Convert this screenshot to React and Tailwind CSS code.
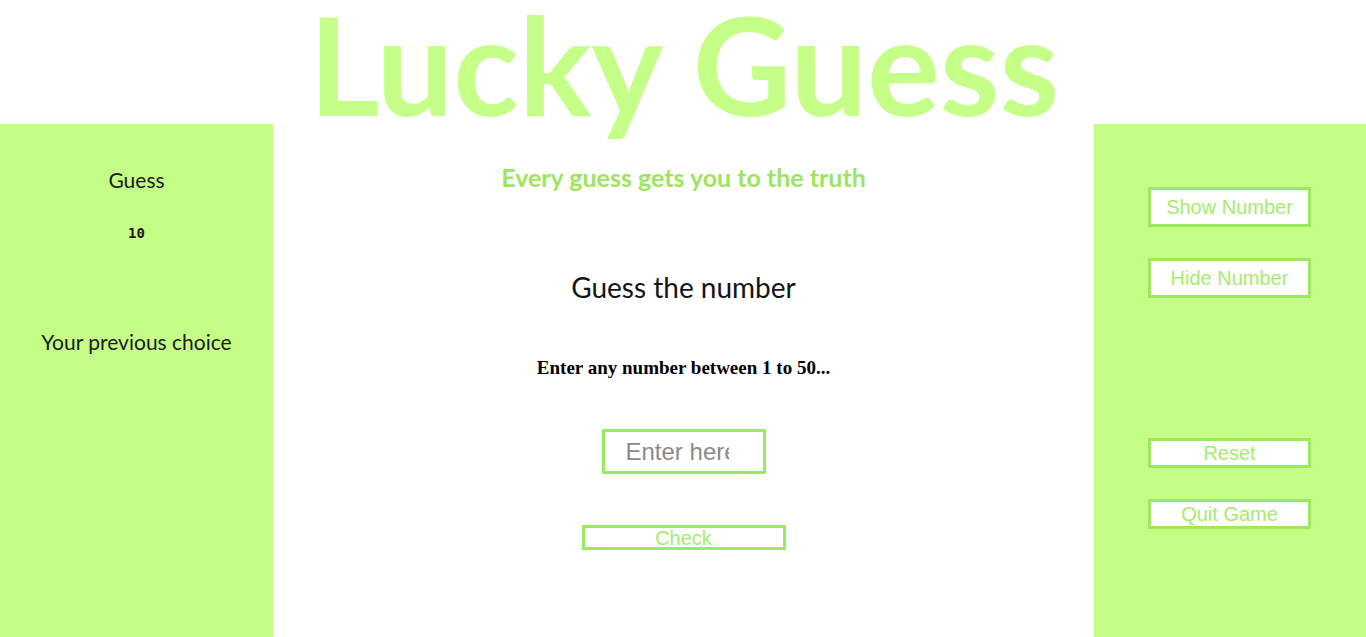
import React from 'react';

const SIDE_BUTTON =
  'w-[163px] bg-white border-[3px] border-[#9be95e] text-[#a6ec6c] text-[20px] font-["Liberation_Sans",Arial,sans-serif] leading-none';

function LeftPanel() {
  return (
    <aside className="w-[273px] shrink-0 bg-[#c5fe87] flex flex-col items-center text-[#1b1b1b] font-['Lato',sans-serif]">
      <p className="mt-[43px] text-[21px] leading-[26px]">Guess</p>
      <p className="mt-[33px] text-[14px] font-bold font-['DejaVu_Sans_Mono',monospace] leading-none">10</p>
      <p className="mt-[89px] text-[21px] leading-[26px]">Your previous choice</p>
    </aside>
  );
}

function RightPanel() {
  return (
    <aside className="w-[272px] shrink-0 bg-[#c5fe87] flex flex-col items-center pr-[1px]">
      <button className={`${SIDE_BUTTON} mt-[63px] h-[40px]`}>Show Number</button>
      <button className={`${SIDE_BUTTON} mt-[31px] h-[40px]`}>Hide Number</button>
      <button className={`${SIDE_BUTTON} mt-[140px] h-[30px]`}>Reset</button>
      <button className={`${SIDE_BUTTON} mt-[31px] h-[30px]`}>Quit Game</button>
    </aside>
  );
}

function Board() {
  return (
    <main className="flex-1 flex flex-col items-center bg-white">
      <p className="mt-[38px] text-[25px] leading-[30px] font-bold text-[#9ee55f] font-['Lato',sans-serif]">
        Every guess gets you to the truth
      </p>
      <h2 className="mt-[78px] text-[28px] leading-[34px] text-[#151515] font-['Lato',sans-serif]">
        Guess the number
      </h2>
      <p className="mt-[52px] text-[19px] leading-[24px] font-bold text-black font-['Liberation_Serif','Times_New_Roman',serif]">
        Enter any number between 1 to 50...
      </p>
      <input
        type="text"
        placeholder="Enter here"
        className="mt-[49px] w-[164px] h-[45px] border-[3px] border-[#9be95e] pl-[21px] pr-[34px] text-[24px] text-gray-700 placeholder:text-[#8a8a8a] outline-none font-['Liberation_Sans',Arial,sans-serif]"
      />
      <button className="mt-[51px] w-[204px] h-[25px] border-[3px] border-[#9be95e] text-[20px] leading-none text-[#a6ec6c] font-['Liberation_Sans',Arial,sans-serif]">
        Check
      </button>
    </main>
  );
}

export default function App() {
  return (
    <div className="w-[1366px] h-[637px] overflow-hidden bg-white flex flex-col">
      <header className="h-[124px] shrink-0 relative z-10 flex justify-center">
        <h1 className="ml-[2px] text-[136px] leading-[128px] font-bold text-[#c6ff88] font-['Lato',sans-serif] whitespace-nowrap">
          Lucky Guess
        </h1>
      </header>
      <div className="flex-1 flex">
        <LeftPanel />
        <Board />
        <RightPanel />
      </div>
    </div>
  );
}
